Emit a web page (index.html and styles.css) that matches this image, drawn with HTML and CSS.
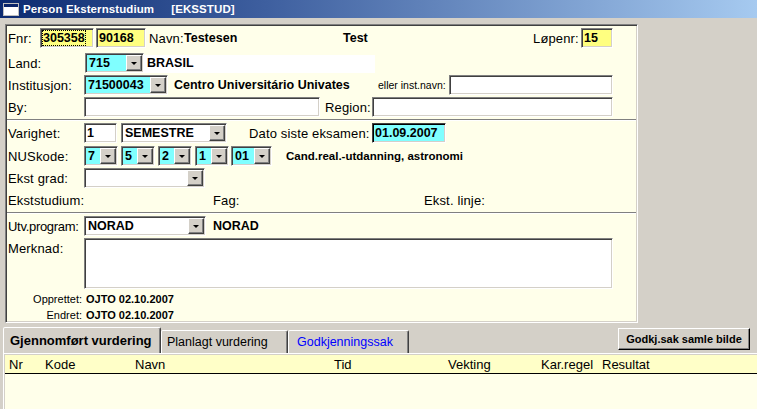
FILE: index.html
```html
<!DOCTYPE html>
<html lang="no">
<head>
<meta charset="utf-8">
<title>Person Eksternstudium</title>
<link rel="stylesheet" href="styles.css">
</head>
<body>
<div class="titlebar">
  <svg class="ticon" width="16" height="13" viewBox="0 0 16 13"><rect x="0.5" y="0.5" width="15" height="12" fill="#fff" stroke="#c0c0c0"/><rect x="1" y="1" width="14" height="3" fill="#0a246a"/></svg>
  <span class="ttl">Person Eksternstudium</span>
  <span class="ttl ttl-code">[EKSSTUD]</span>
</div>

<div class="panel">
  <div class="row r-fnr">
    <span class="lbl w32">Fnr:</span>
    <div class="field yellow w54"><span class="focus">305358</span></div>
    <div class="field yellow w50 ml2">90168</div>
    <span class="lbl ml3 w35">Navn:</span>
    <span class="val w159">Testesen</span>
    <span class="val w190">Test</span>
    <span class="lbl w48">Løpenr:</span>
    <div class="field yellow w32">15</div>
  </div>

  <div class="row mt5">
    <span class="lbl w77">Land:</span>
    <div class="combo cyan w59"><span class="cv">715</span><span class="dd"></span></div>
    <span class="whitebox">BRASIL</span>
  </div>

  <div class="row mt2">
    <span class="lbl w76">Institusjon:</span>
    <div class="combo cyan w84"><span class="cv">71500043</span><span class="dd"></span></div>
    <span class="val ml6 w204">Centro Universitário Univates</span>
    <span class="small w71">eller inst.navn:</span>
    <div class="field white w164"></div>
  </div>

  <div class="row mt2">
    <span class="lbl w76">By:</span>
    <div class="field white w236"></div>
    <span class="lbl ml5 w47">Region:</span>
    <div class="field white w241"></div>
  </div>

  <div class="sep mt2"></div>

  <div class="row mt2">
    <span class="lbl w76">Varighet:</span>
    <div class="field white w33">1</div>
    <div class="combo white ml4 w106"><span class="cv">SEMESTRE</span><span class="dd"></span></div>
    <span class="lbl ml22 w123">Dato siste eksamen:</span>
    <div class="field cyan dark w74">01.09.2007</div>
  </div>

  <div class="row mt3">
    <span class="lbl w76">NUSkode:</span>
    <div class="combo cyan w34"><span class="cv">7</span><span class="dd"></span></div>
    <div class="combo cyan w34 ml3"><span class="cv">5</span><span class="dd"></span></div>
    <div class="combo cyan w34 ml3"><span class="cv">2</span><span class="dd"></span></div>
    <div class="combo cyan w34 ml3"><span class="cv">1</span><span class="dd"></span></div>
    <div class="combo cyan w41 ml2"><span class="cv">01</span><span class="dd"></span></div>
    <span class="val-s ml14">Cand.real.-utdanning, astronomi</span>
  </div>

  <div class="row mt2">
    <span class="lbl w76">Ekst grad:</span>
    <div class="combo white w121"><span class="cv"></span><span class="dd"></span></div>
  </div>

  <div class="row row-text mt5">
    <span class="lbl w205">Ekststudium:</span>
    <span class="lbl w211">Fag:</span>
    <span class="lbl">Ekst. linje:</span>
  </div>

  <div class="sep mt4"></div>

  <div class="row mt2">
    <span class="lbl lbl-narrow w76">Utv.program:</span>
    <div class="combo white w122"><span class="cv">NORAD</span><span class="dd"></span></div>
    <span class="val ml7">NORAD</span>
  </div>

  <div class="row row-memo mt2">
    <span class="lbl w76 memo-lbl">Merknad:</span>
    <div class="field white memo"></div>
  </div>

  <div class="row row-info mt3">
    <span class="info-lbl">Opprettet:</span>
    <span class="info-val">OJTO 02.10.2007</span>
  </div>
  <div class="row row-info mt2">
    <span class="info-lbl">Endret:</span>
    <span class="info-val">OJTO 02.10.2007</span>
  </div>
</div>

<div class="tabbar">
  <div class="tab tab-active">Gjennomført vurdering</div>
  <div class="tab tab-2">Planlagt vurdering</div>
  <div class="tab tab-3">Godkjenningssak</div>
  <div class="btn">Godkj.sak samle bilde</div>
</div>

<div class="grid">
  <div class="grid-head">
    <span class="c-nr">Nr</span>
    <span class="c-kode">Kode</span>
    <span class="c-navn">Navn</span>
    <span class="c-tid">Tid</span>
    <span class="c-vekt">Vekting</span>
    <span class="c-kar">Kar.regel</span>
    <span class="c-res">Resultat</span>
  </div>
  <div class="grid-body"></div>
</div>
</body>
</html>
```

FILE: styles.css
```css
* { box-sizing: border-box; }
html, body { height: 100%; }
body {
  margin: 0;
  background: #d4d0c8;
  font-family: "Liberation Sans", Arial, sans-serif;
  font-size: 13px;
  color: #000;
  overflow: hidden;
  display: flex;
  flex-direction: column;
}

/* title bar */
.titlebar {
  height: 18px;
  background: linear-gradient(to right, #0c2a70 0%, #3e5f9f 35%, #a6caf0 100%);
  display: flex;
  align-items: center;
  padding-left: 3px;
  flex: none;
}
.ticon { display: block; margin-right: 4px; }
.ttl {
  color: #fff;
  font-weight: bold;
  font-size: 11.5px;
  letter-spacing: 0.1px;
}
.ttl-code { margin-left: 17px; }

/* main panel */
.panel {
  flex: none;
  margin: 6px 0 0 5px;
  width: 633px;
  height: 299px;
  background: #ffffea;
  border: 1px solid;
  border-color: #808080 #ffffff #ffffff #808080;
  box-shadow: inset 1px 1px 0 #404040, inset -1px -1px 0 #d4d0c8;
  padding: 3px 0 0 2px;
  display: flex;
  flex-direction: column;
}
.row {
  display: flex;
  align-items: center;
  height: 20px;
  flex: none;
  white-space: nowrap;
}
.row-text { height: 15px; }
.row-memo { height: 51px; align-items: flex-start; }
.row-info { height: 14px; }

.sep {
  flex: none;
  height: 2px;
  margin-left: -1px;
  margin-right: 1px;
  border-top: 1px solid #808080;
  border-bottom: 1px solid #ffffff;
}

.lbl { font-size: 13px; letter-spacing: 0.15px; flex: none; }
.lbl-narrow { letter-spacing: -0.3px; }
.memo-lbl { padding-top: 3px; }
.val { font-weight: bold; font-size: 12.5px; flex: none; }
.val-s { font-weight: bold; font-size: 11.5px; flex: none; }
.small { font-size: 10.5px; flex: none; }

.field {
  flex: none;
  height: 20px;
  border: 1px solid;
  border-color: #808080 #ffffff #ffffff #808080;
  box-shadow: inset 1px 1px 0 #404040, inset -1px -1px 0 #d4d0c8;
  padding: 2px 0 0 2px;
  font-weight: bold;
  font-size: 12.5px;
  line-height: 15px;
}
.field.dark {
  border-color: #404040 #ffffff #ffffff #404040;
  box-shadow: inset 1px 1px 0 #000, inset -1px -1px 0 #d4d0c8;
}
.focus { outline: 1px dotted #000; outline-offset: 0; }
.memo { width: 529px; height: 51px; }

.yellow { background: #ffff80; }
.cyan { background: #80ffff; }
.white { background: #ffffff; }

.combo {
  flex: none;
  height: 20px;
  display: flex;
  border: 1px solid;
  border-color: #808080 #ffffff #ffffff #808080;
  box-shadow: inset 1px 1px 0 #404040, inset -1px -1px 0 #d4d0c8;
  padding: 1px 1px 1px 1px;
}
.cv {
  flex: 1;
  padding: 1px 0 0 2px;
  font-weight: bold;
  font-size: 12.5px;
  line-height: 15px;
  overflow: hidden;
}
.dd {
  flex: none;
  width: 16px;
  height: 16px;
  background: #d4d0c8;
  border: 1px solid;
  border-color: #ffffff #404040 #404040 #ffffff;
  box-shadow: inset -1px -1px 0 #808080;
  display: flex;
  align-items: center;
  justify-content: center;
}
.dd::after {
  content: "";
  width: 0;
  height: 0;
  border-left: 3px solid transparent;
  border-right: 3px solid transparent;
  border-top: 3px solid #000;
  margin: 1px 1px 0 0;
}

.whitebox {
  flex: none;
  background: #ffffff;
  width: 231px;
  height: 18px;
  margin-top: 1px;
  padding: 1px 0 0 3px;
  font-weight: bold;
  font-size: 12.5px;
  line-height: 15px;
}

.info-lbl {
  width: 76px;
  text-align: right;
  font-size: 11px;
  padding-right: 2px;
  flex: none;
}
.info-val {
  margin-left: 2px;
  font-weight: bold;
  font-size: 11px;
}

/* widths & spacing */
.w32 { width: 32px; } .w33 { width: 33px; } .w34 { width: 34px; } .w35 { width: 35px; }
.w41 { width: 41px; } .w47 { width: 47px; } .w48 { width: 48px; } .w50 { width: 50px; }
.w54 { width: 54px; } .w59 { width: 59px; } .w71 { width: 71px; } .w74 { width: 74px; }
.w76 { width: 76px; } .w77 { width: 77px; } .w84 { width: 84px; } .w106 { width: 106px; }
.w121 { width: 121px; } .w122 { width: 122px; } .w123 { width: 123px; } .w159 { width: 159px; }
.w164 { width: 164px; } .w190 { width: 190px; } .w204 { width: 204px; } .w205 { width: 205px; }
.w211 { width: 211px; } .w236 { width: 236px; } .w241 { width: 241px; }
.ml2 { margin-left: 2px; } .ml3 { margin-left: 3px; } .ml4 { margin-left: 4px; }
.ml5 { margin-left: 5px; } .ml6 { margin-left: 6px; } .ml7 { margin-left: 7px; }
.ml14 { margin-left: 14px; } .ml22 { margin-left: 22px; }
.mt2 { margin-top: 2px; } .mt3 { margin-top: 3px; } .mt4 { margin-top: 4px; } .mt5 { margin-top: 5px; }

/* tabs */
.tabbar {
  flex: none;
  height: 27px;
  margin-top: 3px;
  display: flex;
  align-items: flex-end;
  padding-left: 3px;
  padding-right: 7px;
}
.tab {
  flex: none;
  height: 23px;
  background: #d4d0c8;
  border: 1px solid;
  border-bottom: none;
  border-color: #ffffff #404040 transparent #ffffff;
  box-shadow: inset -1px 0 0 #808080;
  border-radius: 2px 2px 0 0;
  font-size: 12.5px;
  padding: 4px 0 0 5px;
  white-space: nowrap;
}
.tab-active {
  width: 158px;
  height: 26px;
  font-weight: bold;
  font-size: 13px;
  padding: 5px 0 0 6px;
}
.tab-2 { width: 127px; }
.tab-3 { width: 121px; color: #0000ff; padding-left: 8px; }
.btn {
  flex: none;
  margin-left: auto;
  align-self: flex-start;
  margin-top: 2px;
  width: 132px;
  height: 22px;
  background: #d4d0c8;
  border: 1px solid;
  border-color: #ffffff #000000 #000000 #ffffff;
  box-shadow: inset -1px -1px 0 #808080;
  font-weight: bold;
  font-size: 11px;
  display: flex;
  align-items: center;
  justify-content: center;
  white-space: nowrap;
}

/* grid */
.grid {
  flex: 1;
  margin-left: 3px;
  border-top: 1px solid #ffffff;
  border-left: 1px solid #ffffff;
  box-shadow: inset 1px 0 0 #d4d0c8;
  display: flex;
  flex-direction: column;
  padding-left: 1px;
}
.grid-head {
  flex: none;
  height: 20px;
  background: #ffffc8;
  border-top: 1px solid #d4d0c8;
  border-bottom: 1px solid #000;
  display: flex;
  align-items: center;
  font-size: 13px;
  padding-left: 4px;
  white-space: nowrap;
}
.grid-head span { flex: none; }
.c-nr { width: 36px; }
.c-kode { width: 90px; }
.c-navn { width: 199px; }
.c-tid { width: 114px; }
.c-vekt { width: 93px; }
.c-kar { width: 61px; }
.grid-body { flex: 1; background: #ffffea; }
```
